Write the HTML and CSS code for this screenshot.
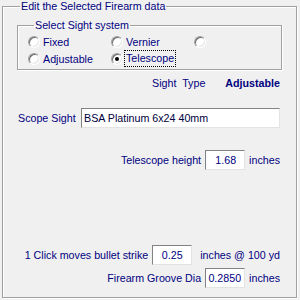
FILE: index.html
```html
<!DOCTYPE html>
<html lang="en">
<head>
    <meta charset="UTF-8">
    <title>Edit Firearm</title>
    <link rel="stylesheet" href="styles.css">
</head>
<body>
    <fieldset class="panel">
        <legend>Edit the Selected Firearm data</legend>

        <!-- Sight system choice -->
        <fieldset class="sight-system">
            <legend>Select Sight system</legend>
            <div class="radios">
                <label class="opt"><span class="radio"></span>Fixed</label>
                <label class="opt"><span class="radio"></span>Vernier</label>
                <label class="opt"><span class="radio"></span></label>
                <label class="opt"><span class="radio"></span>Adjustable</label>
                <label class="opt"><span class="radio checked"></span><span class="focus">Telescope</span></label>
            </div>
        </fieldset>

        <div class="row type-row">
            <span>Sight&nbsp; Type</span>
            <b class="type-value">Adjustable</b>
        </div>

        <div class="row scope-row">
            <label for="scope">Scope Sight</label>
            <input id="scope" class="field wide" type="text" value="BSA Platinum 6x24 40mm" readonly>
        </div>

        <div class="row height-row">
            <label for="height">Telescope height</label>
            <input id="height" class="field num" type="text" value="1.68" readonly>
            <span>inches</span>
        </div>

        <div class="row click-row">
            <label for="click">1 Click moves bullet strike</label>
            <input id="click" class="field num center" type="text" value="0.25" readonly>
            <span class="unit-wide">inches @ 100 yd</span>
        </div>

        <div class="row groove-row">
            <label for="groove">Firearm Groove Dia</label>
            <input id="groove" class="field num tight" type="text" value="0.2850" readonly>
            <span>inches</span>
        </div>
    </fieldset>
</body>
</html>
```

FILE: styles.css
```css
/* Look of an old Windows dialog */
body {
    margin: 0;
    width: 300px;
    height: 300px;
    background-color: #f0f0f0;
    font-family: "Liberation Sans", Arial, sans-serif;
    font-size: 10.7px;
    color: #000080;
    overflow: hidden;
}
fieldset {
    margin: 0;
    min-width: 0;
    border: 1px solid #a0a0a0;
    box-shadow: 1px 1px 0 #fff, inset 1px 1px 0 #fff;
}
legend {
    padding: 0 1px;
    line-height: 13px;
}
.panel {
    box-sizing: border-box;
    margin: 0 3px 2px 2px;
    height: 298px;
    padding: 0 16px 0 14px;
}
.panel > legend {
    margin-left: 3px;
}
.sight-system {
    margin: 6px -2px 0 0;
    padding: 1px 0 2px 10px;
}
.sight-system > legend {
    margin-left: 6px;
}
.radios {
    display: grid;
    grid-template-columns: 83px 83px auto;
    grid-auto-rows: 17px;
}
.opt {
    display: flex;
    align-items: center;
    gap: 3px;
}
.radio {
    box-sizing: border-box;
    width: 12px;
    height: 12px;
    border-radius: 50%;
    background: #fff;
    border: 1px solid;
    border-color: #a0a0a0 #fff #fff #a0a0a0;
    box-shadow: inset 1px 1px 0 #696969, inset -1px -1px 0 #e3e3e3;
    display: flex;
    align-items: center;
    justify-content: center;
}
.radio.checked::after {
    content: "";
    width: 4px;
    height: 4px;
    border-radius: 50%;
    background: #000;
}
.focus {
    border: 1px dotted #000;
    padding: 1px 1px 2px 1px;
    margin-left: -2px;
}
.row {
    display: flex;
    align-items: center;
    justify-content: flex-end;
    gap: 4px;
    white-space: nowrap;
}
.row label,
.row span {
    flex-shrink: 0;
}
.type-row {
    margin-top: 7px;
    gap: 20px;
    line-height: 13px;
}
.type-value {
    font-weight: bold;
}
.scope-row {
    margin-top: 18px;
    justify-content: space-between;
    padding-left: 1px;
}
.height-row {
    margin-top: 22px;
}
.click-row {
    margin-top: 75px;
}
.groove-row {
    margin-top: 3px;
}
.field {
    box-sizing: border-box;
    height: 20px;
    border: 1px solid;
    border-color: #828282 #e3e3e3 #e3e3e3 #828282;
    background: #fff;
    font: inherit;
    color: #000080;
    padding: 0 2px;
    outline: none;
}
.wide {
    width: 199px;
    color: #000040;
}
.num {
    width: 40px;
    text-align: right;
    padding-right: 8px;
}
.center {
    text-align: center;
    padding-right: 2px;
}
.tight {
    padding: 0 3px 0 2px;
}
.unit-wide {
    margin-left: 4px;
}
```
